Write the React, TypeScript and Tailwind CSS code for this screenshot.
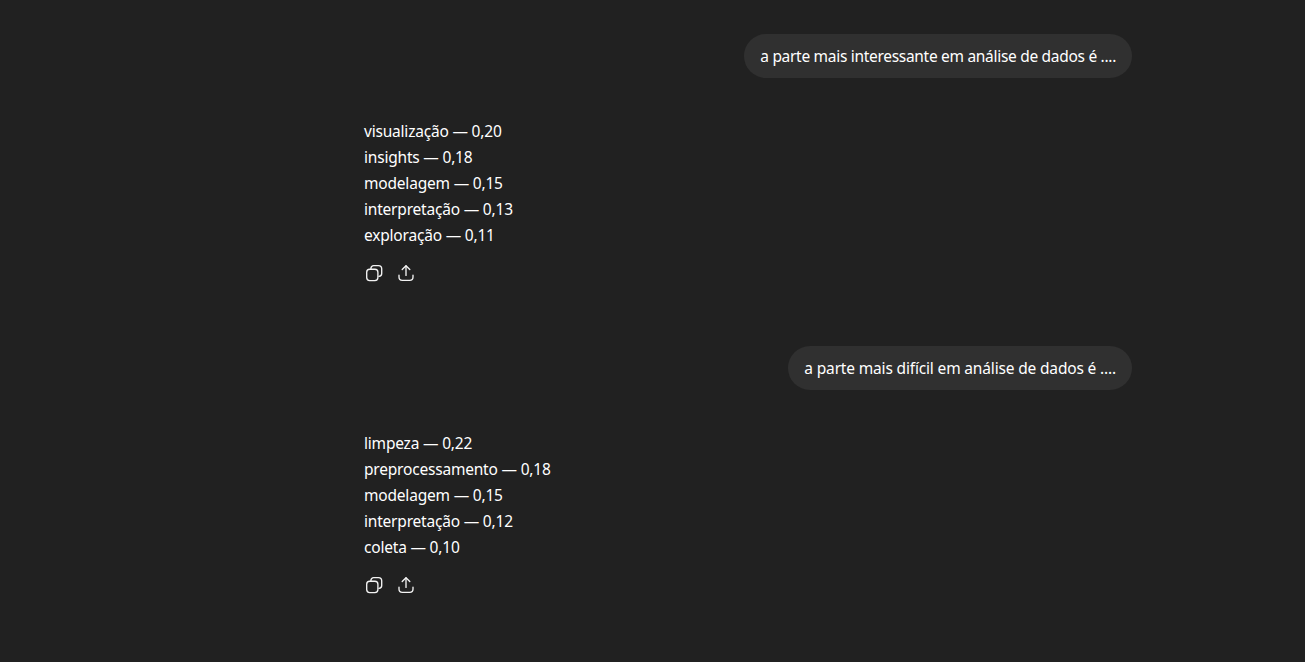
const font = "font-['Noto_Sans','Open_Sans',sans-serif]";

function CopyIcon() {
  return (
    <svg width="20" height="20" viewBox="0 0 20 20" fill="none" stroke="#f3f3f3" strokeWidth="1.35" strokeLinecap="round" strokeLinejoin="round">
      <rect x="2.7" y="6.2" width="11.2" height="11.4" rx="3" />
      <path d="M6.9 6.1V5.4c0-1.6 1.2-2.8 2.8-2.8h4.8c1.9 0 3.2 1.3 3.2 3.2v4.6c0 1.6-1 2.8-2.7 3" />
    </svg>
  );
}

function ShareIcon() {
  return (
    <svg width="20" height="20" viewBox="0 0 20 20" fill="none" stroke="#f3f3f3" strokeWidth="1.35" strokeLinecap="round" strokeLinejoin="round">
      <path d="M10 12.4V3" />
      <path d="M6.2 6.6 10 2.8l3.8 3.8" />
      <path d="M3 12.2v1.8c0 1.9 1.4 3.3 3.3 3.3h7.4c1.9 0 3.3-1.4 3.3-3.3v-1.8" />
    </svg>
  );
}

function Exchange({ prompt, lines, first }: { prompt: string; lines: string[]; first?: boolean }) {
  return (
    <div className={first ? "flex flex-col" : "flex flex-col mt-[63px]"}>
      <div className="flex justify-end">
        <div className={first
          ? "h-[44px] rounded-[22px] bg-[#303030] px-4 py-[9px] text-[15.5px] leading-[26px] text-white tracking-[-0.3px]"
          : "h-[44px] rounded-[22px] bg-[#303030] px-4 py-[9px] text-[15.5px] leading-[26px] text-white tracking-[-0.165px]"}>
          {prompt}
        </div>
      </div>
      <div className="mt-[40px] text-[15.5px] leading-[26px] text-white tracking-[-0.2px]">
        {lines.map((l) => (
          <div key={l} className="h-[26px]">{l}</div>
        ))}
      </div>
      <div className="mt-[15px] flex h-[20px] gap-3">
        <CopyIcon />
        <ShareIcon />
      </div>
    </div>
  );
}

export default function App() {
  return (
    <div className={`h-[662px] w-full overflow-hidden bg-[#212121] ${font}`}>
      <div className="ml-[364px] w-[768px] pt-[34px]">
        <Exchange
          first
          prompt="a parte mais interessante em análise de dados é ...."
          lines={["visualização — 0,20", "insights — 0,18", "modelagem — 0,15", "interpretação — 0,13", "exploração — 0,11"]}
        />
        <Exchange
          prompt="a parte mais difícil em análise de dados é ...."
          lines={["limpeza — 0,22", "preprocessamento — 0,18", "modelagem — 0,15", "interpretação — 0,12", "coleta — 0,10"]}
        />
      </div>
    </div>
  );
}
